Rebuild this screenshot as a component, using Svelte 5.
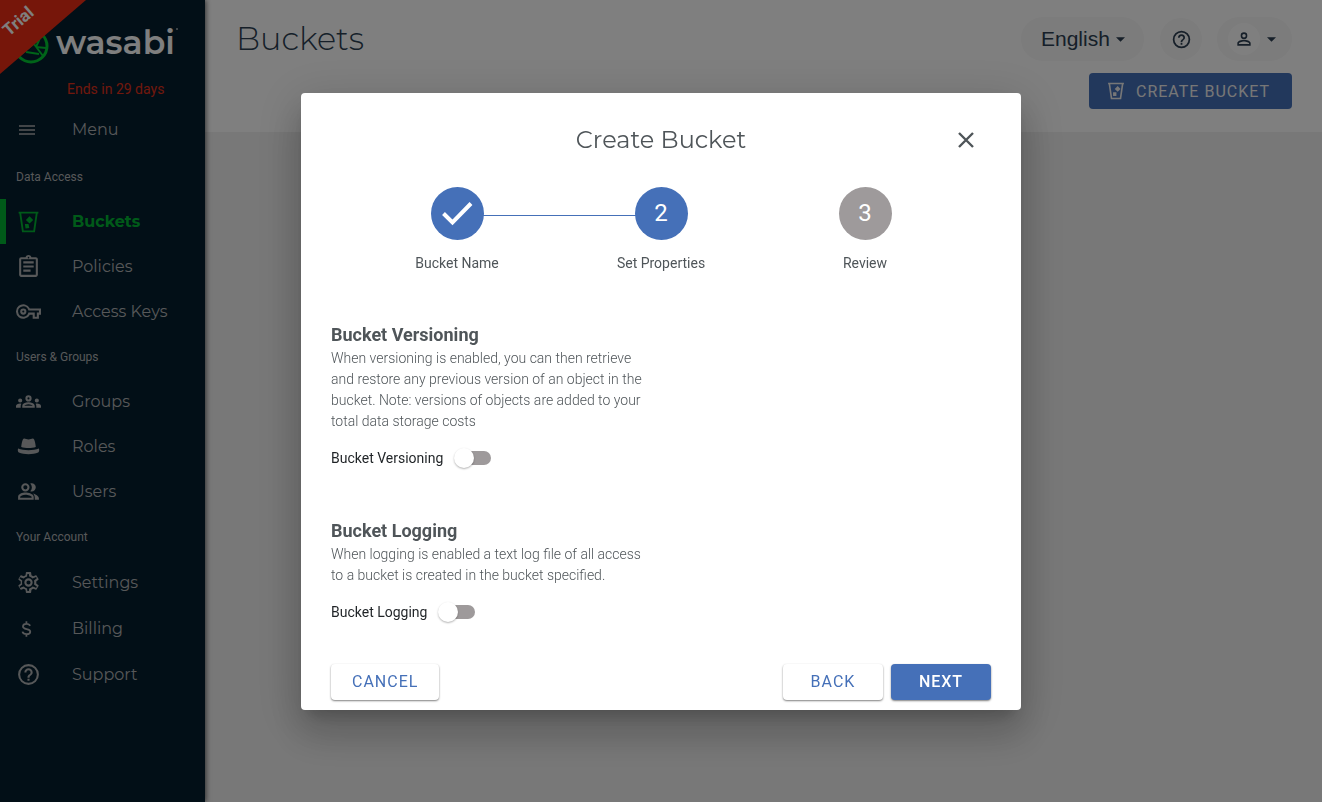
<script>
  const groups = [
    {
      title: "Data Access",
      items: [
        { label: "Buckets", icon: "bucket", active: true },
        { label: "Policies", icon: "clipboard" },
        { label: "Access Keys", icon: "key" },
      ],
    },
    {
      title: "Users & Groups",
      items: [
        { label: "Groups", icon: "groups" },
        { label: "Roles", icon: "hat" },
        { label: "Users", icon: "users" },
      ],
    },
    {
      title: "Your Account",
      tall: true,
      items: [
        { label: "Settings", icon: "gear" },
        { label: "Billing", icon: "dollar" },
        { label: "Support", icon: "help" },
      ],
    },
  ];

  const steps = [
    { label: "Bucket Name", state: "done" },
    { label: "Set Properties", state: "current" },
    { label: "Review", state: "todo" },
  ];

  let versioning = false;
  let logging = false;
  let language = "English";
</script>

<div class="layout">
  <aside class="sidebar">
    <div class="ribbon"><span>Trial</span></div>
    <a class="logo" href="#home" aria-label="wasabi">
      <svg width="36" height="36" viewBox="0 0 36 36" fill="none" stroke="#00c832" stroke-width="3">
        <circle cx="18" cy="18" r="16" />
        <path d="M31 7L6 28M21 16l9 12M27 10l-4 9M17 19L8 8M13 24l13 2M23 19l10 1" stroke-width="2" />
      </svg>
      <span>wasabi</span>
      <i></i>
    </a>
    <p class="trial-note">Ends in 29 days</p>

    <nav>
      <button class="nav-item menu">
        <svg width="24" height="24" viewBox="0 0 24 24" fill="none" stroke="currentColor" stroke-width="2">
          <path d="M3 9h16M3 13h16M3 17h16" stroke-width="1.500" />
        </svg>
        <span>Menu</span>
      </button>
      {#each groups as group}
        <h2>{group.title}</h2>
        {#each group.items as item}
          <a class="nav-item" class:active={item.active} class:tall={group.tall} href="#{item.icon}">
            {#if item.icon === "bucket"}
              <svg width="25" height="25" viewBox="0 0 24 24">
                <path fill="none" stroke="currentColor" stroke-width="1.800" d="M2.500 3.500h19M4 3.500l2.600 18h10.800l2.600-18" />
                <path fill="currentColor" d="M13 7l3.500 3.500L13 14l-3.500-3.500zM8.500 14.500l3.500 -.2.8 4-3.600.4z" />
              </svg>
            {:else if item.icon === "clipboard"}
              <svg width="25" height="25" viewBox="0 0 24 24" fill="currentColor">
                <path d="M7 15h7v2H7zm0-4h10v2H7zm0-4h10v2H7zm12-4h-4.180C14.400 1.840 13.300 1 12 1S9.600 1.840 9.180 3H5a2 2 0 0 0-2 2v15c0 1.100.9 2 2 2h14c1.100 0 2-.9 2-2V5c0-1.100-.9-2-2-2zm-7-.25a.75.75 0 1 1 0 1.500.75.75 0 0 1 0-1.500zM19 20H5V5h14z" />
              </svg>
            {:else if item.icon === "key"}
              <svg width="25" height="25" viewBox="0 0 24 24" fill="currentColor">
                <path d="M22 19h-6v-4h-2.680A7 7 0 1 1 13.320 9H24v6h-2zm-4-2h2v-4h2v-2H11.940l-.230-.670A5 5 0 1 0 7 17a5.030 5.030 0 0 0 4.710-3.330l.230-.670H18zM7 15a3 3 0 1 1 0-6 3 3 0 0 1 0 6zm0-4a1 1 0 1 0 0 2 1 1 0 0 0 0-2z" />
              </svg>
            {:else if item.icon === "groups"}
              <svg width="25" height="25" viewBox="0 0 24 24" fill="currentColor">
                <path d="M4 13a2 2 0 1 0 0-4 2 2 0 0 0 0 4zm1.130 1.100A6.950 6.950 0 0 0 4 14c-.990 0-1.930.210-2.780.580A2.010 2.010 0 0 0 0 16.430V18h4.500v-1.610c0-.830.230-1.610.630-2.290zM20 13a2 2 0 1 0 0-4 2 2 0 0 0 0 4zm4 3.430c0-.810-.480-1.530-1.220-1.850a6.950 6.950 0 0 0-3.910-.480c.4.680.630 1.460.630 2.290V18H24zm-7.760-2.780A10.500 10.500 0 0 0 12 12.750c-1.630 0-3.070.390-4.240.9A2.990 2.990 0 0 0 6 16.390V18h12v-1.610c0-1.180-.680-2.260-1.760-2.740zM8.070 16c.090-.230.130-.390.910-.690a8.300 8.300 0 0 1 6.040 0c.770.3.810.460.910.690zM12 8a1 1 0 1 1 0 2 1 1 0 0 1 0-2m0-2a3 3 0 1 0 0 6 3 3 0 0 0 0-6z" />
              </svg>
            {:else if item.icon === "hat"}
              <svg width="25" height="25" viewBox="0 0 24 24" fill="currentColor">
                <path d="M5 12.500c.3-3.500.8-5.500 1.600-7.300C7.300 3.600 8.600 4.300 9.700 4.800c1.500.6 3.100.6 4.600 0 1.100-.5 2.400-1.200 3.100.4.800 1.800 1.300 3.800 1.600 7.300-4 1.400-10 1.400-14 0z" />
                <path d="M2 14c5.500 2 14.500 2 20 0 .5 1.500.3 3-.7 3.700-5 2.200-13.600 2.200-18.600 0C1.700 17 1.500 15.500 2 14z" />
              </svg>
            {:else if item.icon === "users"}
              <svg width="25" height="25" viewBox="0 0 24 24" fill="currentColor">
                <path d="M16.500 13.800c2 .7 5.500 2.300 5.500 4.700V20h-4v-2c0-1.800-.6-3.100-1.500-4.200zM15 12a4 4 0 0 0 0-8c-.4 0-.9.100-1.300.200a6 6 0 0 1 0 7.600c.4.100.9.200 1.300.200zM9 12a4 4 0 1 0 0-8 4 4 0 0 0 0 8zm0-6a2 2 0 1 1 0 4 2 2 0 0 1 0-4zm0 7c-2.670 0-7 1.340-7 4v3h15v-3c0-2.660-5.330-4-8-4zm6 5H4v-1c.2-.7 2.600-2 5-2s5.800 1.300 6 2z" />
              </svg>
            {:else if item.icon === "gear"}
              <svg width="25" height="25" viewBox="0 0 24 24" fill="currentColor">
                <path d="M19.430 12.980c.040-.320.070-.640.070-.980s-.030-.660-.070-.980l2.110-1.650c.190-.150.240-.420.120-.640l-2-3.460a.5.5 0 0 0-.610-.220l-2.490 1a7.300 7.300 0 0 0-1.690-.980l-.380-2.650A.49.49 0 0 0 14 2h-4a.49.49 0 0 0-.490.420l-.380 2.650c-.610.250-1.170.590-1.690.980l-2.490-1a.5.5 0 0 0-.610.220l-2 3.460c-.130.220-.070.490.120.640l2.110 1.650a7.900 7.900 0 0 0 0 1.960l-2.110 1.650a.5.5 0 0 0-.120.640l2 3.460c.120.220.390.3.610.220l2.490-1c.520.4 1.080.730 1.690.980l.380 2.650c.3.240.240.420.490.420h4c.250 0 .460-.180.490-.420l.380-2.650c.610-.250 1.170-.590 1.690-.980l2.490 1c.230.090.490 0 .610-.220l2-3.460a.5.5 0 0 0-.120-.640zm-1.980-1.710c.070.540.070.920 0 1.460l-.140 1.130 1.590 1.250 1.080.840-.7 1.210-1.270-.510-2.100-.830-.9.680c-.430.320-.840.560-1.250.730l-1.060.430-.160 1.130-.2 1.350h-1.400l-.350-2.480-1.060-.430a5.700 5.700 0 0 1-1.230-.710l-.910-.7-2.110.850-1.270.510-.7-1.210 2.670-2.090-.140-1.130a6 6 0 0 1 0-1.480l.140-1.130-2.670-2.090.7-1.210 3.370 1.340.9-.680c.430-.320.840-.560 1.250-.730l1.060-.430.360-2.480h1.390l.350 2.480 1.060.430c.430.180.830.410 1.230.710l.910.7 3.380-1.360.7 1.210-2.670 2.090zM12 8a4 4 0 1 0 0 8 4 4 0 0 0 0-8zm0 6a2 2 0 1 1 0-4 2 2 0 0 1 0 4z" />
              </svg>
            {:else if item.icon === "dollar"}
              <svg width="25" height="25" viewBox="0 0 24 24" fill="none" stroke="currentColor" stroke-width="1.700">
                <path d="M13.500 9.500C13.100 8.300 12 7.600 10 7.600c-2 0-3.300.9-3.300 2.400 0 3.400 7 1.600 7 5 0 1.600-1.400 2.400-3.600 2.400-2.100 0-3.500-.8-3.900-2.400M10 5v3M10 17v3" />
              </svg>
            {:else}
              {@render helpIcon(25)}
            {/if}
            <span>{item.label}</span>
          </a>
        {/each}
      {/each}
    </nav>
  </aside>

  <main>
    <header>
      <div class="row">
        <h1>Buckets</h1>
        <div class="language">
          <select aria-label="Language" bind:value={language}>
            <option>English</option>
          </select>
          {@render caret()}
        </div>
        <button class="help" aria-label="Help">{@render helpIcon(21)}</button>
        <button class="user" aria-label="Account">
          <span>
            <svg width="20" height="20" viewBox="0 0 24 24" fill="currentColor">
              <path d="M12 5.900a2.100 2.100 0 1 1 0 4.200 2.100 2.100 0 0 1 0-4.200m0 9c2.970 0 6.100 1.460 6.100 2.100v1.100H5.900V17c0-.640 3.130-2.100 6.100-2.100M12 4a4 4 0 1 0 0 8 4 4 0 0 0 0-8zm0 9c-2.670 0-8 1.340-8 4v3h16v-3c0-2.660-5.330-4-8-4z" />
            </svg>
          </span>
          {@render caret()}
        </button>
      </div>
      <button class="btn primary create">
        <svg width="20" height="20" viewBox="0 0 24 24">
          <path fill="none" stroke="currentColor" stroke-width="2" d="M2.500 3h19M4 3l2.600 18h10.800L20 3" />
          <path fill="currentColor" d="M14 6l3.500 3.500L14 13l-3.500-3.500zM8.500 13.500h4v4.500h-4z" />
        </svg>
        CREATE BUCKET
      </button>
    </header>
  </main>
</div>

<div class="scrim">
  <div class="dialog" role="dialog" aria-modal="true" aria-labelledby="dialog-title">
    <div class="dialog-head">
      <h2 id="dialog-title">Create Bucket</h2>
      <button class="close" aria-label="Close">
        <svg width="24" height="24" viewBox="0 0 24 24" fill="none" stroke="currentColor" stroke-width="2.400">
          <path d="M5 5l14 14M19 5L5 19" />
        </svg>
      </button>
    </div>

    <ol class="steps">
      {#each steps as step, i}
        <li class={step.state}>
          <div class="circle">
            {#if step.state === "done"}
              <svg width="36" height="36" viewBox="0 0 36 36" fill="none" stroke="#fff" stroke-width="4">
                <path d="M4.500 18.500l9 9L32 8.500" />
              </svg>
            {:else}
              {i + 1}
            {/if}
          </div>
          <span>{step.label}</span>
        </li>
      {/each}
    </ol>

    <section>
      <h3>Bucket Versioning</h3>
      <p>
        When versioning is enabled, you can then retrieve and restore any previous version of an
        object in the bucket. Note: versions of objects are added to your total data storage costs
      </p>
      <label>Bucket Versioning <input type="checkbox" bind:checked={versioning} /></label>
    </section>

    <section>
      <h3>Bucket Logging</h3>
      <p>
        When logging is enabled a text log file of all access to a bucket is created in the bucket
        specified.
      </p>
      <label>Bucket Logging <input type="checkbox" bind:checked={logging} /></label>
    </section>

    <div class="actions">
      <button class="btn cancel">CANCEL</button>
      <button class="btn">BACK</button>
      <button class="btn primary">NEXT</button>
    </div>
  </div>
</div>

{#snippet helpIcon(size)}
  <svg width={size} height={size} viewBox="0 0 24 24" fill="currentColor">
    <path d="M11 18h2v-2h-2zm1-16a10 10 0 1 0 0 20 10 10 0 0 0 0-20zm0 18a8 8 0 1 1 0-16 8 8 0 0 1 0 16zm0-14a4 4 0 0 0-4 4h2c0-1.100.9-2 2-2s2 .9 2 2c0 2-3 1.750-3 5h2c0-2.250 3-2.500 3-5a4 4 0 0 0-4-4z" />
  </svg>
{/snippet}

{#snippet caret()}
  <svg class="caret" width="9" height="5" viewBox="0 0 10 5"><path d="M0 0h10L5 5z" fill="currentColor" /></svg>
{/snippet}

<style>
  :global(body) {
    margin: 0;
    font-family: Roboto, sans-serif;
    background: #f0f0f0;
  }

  h1,
  h2,
  h3,
  p,
  ol {
    margin: 0;
    padding: 0;
    font-weight: normal;
  }

  button {
    font-family: inherit;
    border: none;
    padding: 0;
    background: none;
    cursor: pointer;
  }

  svg {
    display: block;
    flex: none;
  }

  .layout {
    display: flex;
    min-height: 100vh;
  }

  .sidebar {
    position: relative;
    flex: none;
    width: 205px;
    background: #041e2e;
    color: #aeb0b2;
    box-shadow: 1px 0 5px rgba(0, 0, 0, 0.6);
  }

  .ribbon {
    position: absolute;
    top: 0;
    left: 0;
    width: 86px;
    height: 74px;
    background: #ec2d14;
    clip-path: polygon(0 0, 100% 0, 0 100%);
  }

  .ribbon span {
    position: absolute;
    top: 11px;
    left: 0;
    width: 36px;
    text-align: center;
    color: #fff;
    font-size: 17px;
    font-weight: 700;
    line-height: 20px;
    transform: rotate(-41deg);
  }

  .logo {
    display: flex;
    align-items: center;
    height: 36px;
    padding: 28px 0 0 13px;
    color: #fff;
    text-decoration: none;
  }

  .logo span {
    margin: -8px 0 0 7px;
    font-family: Montserrat, sans-serif;
    font-size: 33px;
    font-weight: 600;
    line-height: 44px;
  }

  .logo i {
    width: 2px;
    height: 2px;
    margin: -34px 0 0 1px;
    border-radius: 50%;
    background: #9aa4aa;
  }

  .trial-note {
    padding: 15px 0 17px 67px;
    color: #e0301a;
    font-size: 14px;
    line-height: 20px;
  }

  nav h2 {
    padding: 2px 0 0 16px;
    font-size: 12px;
    line-height: 43px;
  }

  .nav-item {
    box-sizing: border-box;
    display: flex;
    align-items: center;
    gap: 31px;
    width: 100%;
    height: 45px;
    padding-left: 16px;
    color: inherit;
    font-family: Montserrat, sans-serif;
    font-size: 16px;
    font-weight: 400;
    text-decoration: none;
  }

  .nav-item.menu {
    gap: 32px;
    height: 46px;
    margin: -10px 0 2px;
  }

  .nav-item.tall {
    height: 46px;
  }

  .nav-item.active {
    border-left: 6px solid #00b432;
    padding-left: 10px;
    color: #00b432;
    font-weight: 700;
  }

  main {
    flex: 1;
    color: #2c3e52;
  }

  header {
    display: flex;
    flex-direction: column;
    align-items: flex-end;
    gap: 12px;
    padding: 17px 30px 23px 31px;
    background: #fff;
  }

  .row {
    display: flex;
    align-items: center;
    width: 100%;
  }

  h1 {
    flex: 1;
    font-family: Montserrat, sans-serif;
    font-size: 32px;
    font-weight: 300;
    line-height: 44px;
  }

  .language,
  .user {
    display: flex;
    align-items: center;
    height: 44px;
    border-radius: 22px;
    background: #f8f8f8;
    color: inherit;
  }

  .language {
    position: relative;
    width: 123px;
  }

  .language select {
    appearance: none;
    width: 100%;
    height: 100%;
    padding: 0 0 2px 20px;
    border: none;
    background: none;
    color: inherit;
    font-family: "Liberation Sans", Arial, sans-serif;
    font-size: 21px;
  }

  .language .caret {
    position: absolute;
    right: 19px;
    pointer-events: none;
  }

  .help {
    display: grid;
    place-items: center;
    width: 42px;
    height: 42px;
    margin: 0 15px 0 16px;
    border-radius: 50%;
    background: #f8f8f8;
    color: inherit;
  }

  .user {
    gap: 7px;
    width: 75px;
    padding-left: 11px;
  }

  .user span {
    display: grid;
    place-items: center;
    width: 32px;
    height: 32px;
    border-radius: 50%;
    background: #fff;
  }

  .btn {
    min-width: 100px;
    height: 36px;
    padding: 0 21px;
    border-radius: 4px;
    background: #fff;
    color: #4570b8;
    font-size: 16px;
    letter-spacing: 1px;
    box-shadow: 0 1px 2px rgba(0, 0, 0, 0.5);
  }

  .btn.primary {
    background: #4570b8;
    color: #fff;
    font-weight: 500;
  }

  .btn.create {
    display: flex;
    align-items: center;
    gap: 10px;
    padding: 0 22px 0 17px;
    color: #eee;
    font-weight: 400;
    box-shadow: none;
  }

  .scrim {
    position: fixed;
    inset: 0;
    display: flex;
    align-items: center;
    justify-content: center;
    background: rgba(0, 0, 0, 0.5);
  }

  .dialog {
    box-sizing: border-box;
    width: 720px;
    max-width: 92vw;
    padding: 30px 30px 10px;
    border-radius: 4px;
    background: #fff;
    color: #4f5559;
    box-shadow:
      0 11px 15px -7px rgba(0, 0, 0, 0.2),
      0 24px 38px 3px rgba(0, 0, 0, 0.14),
      0 9px 46px 8px rgba(0, 0, 0, 0.12);
  }

  .dialog-head {
    display: grid;
    grid-template-columns: 24px 1fr 24px;
    align-items: center;
    padding: 0 13px 30px;
  }

  .dialog-head h2 {
    grid-column: 2;
    text-align: center;
    font-family: Montserrat, sans-serif;
    font-size: 24px;
    font-weight: 400;
    line-height: 34px;
  }

  .close {
    color: #4f5559;
  }

  .steps {
    display: grid;
    grid-template-columns: repeat(3, 1fr);
    padding: 0 24px 49px;
    list-style: none;
    text-align: center;
    font-size: 14px;
    line-height: 21px;
  }

  .steps li {
    position: relative;
  }

  .steps .current::before {
    content: "";
    position: absolute;
    top: 28px;
    right: 50%;
    width: 100%;
    height: 1px;
    background: #4570b8;
  }

  .circle {
    position: relative;
    display: grid;
    place-items: center;
    width: 53px;
    height: 53px;
    margin: 0 auto 13px;
    border-radius: 50%;
    background: #4570b8;
    color: #fff;
    font-size: 24px;
  }

  .done .circle {
    z-index: 1;
  }

  .todo .circle {
    background: #9e9a9b;
  }

  section {
    padding-bottom: 51px;
  }

  section + section {
    padding-bottom: 42px;
  }

  h3 {
    font-size: 18px;
    font-weight: 700;
    line-height: 24px;
  }

  section p {
    max-width: 320px;
    padding-top: 1px;
    margin-bottom: 16px;
    font-size: 14px;
    font-weight: 300;
    line-height: 21px;
  }

  label {
    display: flex;
    align-items: center;
    gap: 16px;
    height: 20px;
    color: #1f2326;
    font-size: 14px;
  }

  input {
    appearance: none;
    position: relative;
    width: 32px;
    height: 14px;
    margin: 0;
    border-radius: 7px;
    background: #9e9a9b;
  }

  input::before {
    content: "";
    position: absolute;
    top: -3px;
    left: -5px;
    width: 20px;
    height: 20px;
    border-radius: 50%;
    background: #fff;
    box-shadow: 0 1px 2px rgba(0, 0, 0, 0.3);
  }

  input:checked::before {
    left: 17px;
    background: #4570b8;
  }

  .actions {
    display: flex;
    gap: 8px;
  }

  .cancel {
    margin-right: auto;
  }
</style>
